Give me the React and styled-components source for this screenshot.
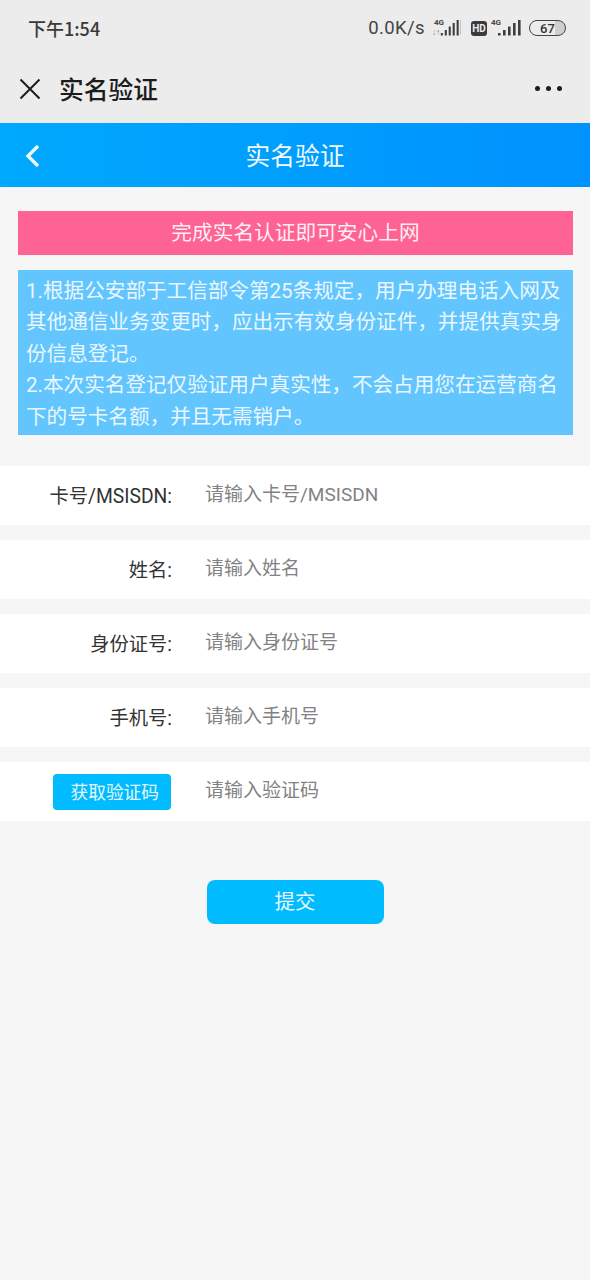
import React from "react";
import styled, { createGlobalStyle } from "styled-components";

const Global = createGlobalStyle`
  html, body { margin: 0; padding: 0; background: #f6f6f6; }
  * { box-sizing: border-box; }
  body { font-family: "Noto Sans CJK SC", "Noto Sans", sans-serif; }
`;
const Page = styled.div`
  width: 590px; height: 1280px; background: #f6f6f6; overflow: hidden;
  display: flex; flex-direction: column;
`;
const Chrome = styled.div`background: #ececec; height: 123px; display: flex; flex-direction: column;`;
const StatusBar = styled.div`
  height: 56px; display: flex; align-items: center; justify-content: space-between;
  padding: 0 24px 0 28px; color: #3a3a3a;
`;
const Time = styled.span`font-size: 18px; font-weight: 500; font-family: "Noto Sans CJK SC", Roboto, sans-serif; line-height: 1; margin-top: -1px;`;
const StatusRight = styled.div`display: flex; align-items: center; gap: 8px;`;
const Speed = styled.span`font-family: Roboto, sans-serif; font-size: 18.5px; letter-spacing: 0.4px; color: #444; margin-right: -1px;`;
const Signal = styled.div`position: relative; width: ${p => p.$w}px; height: 20px;`;
const Tiny = styled.span`
  position: absolute; left: ${p => p.$l}px; top: 0; font: 700 8px/9px Roboto, sans-serif; color: #444;
`;
const Arrows = styled.span`
  position: absolute; left: 0; top: 10px; font: 400 8px/9px Roboto, sans-serif; color: #777;
`;
const HdBadge = styled.span`
  width: 16px; height: 15px; border-radius: 3px; background: #3b3b3b; color: #ececec;
  font: 700 10px/15px Roboto, sans-serif; text-align: center; margin: 0 -4px 0 2px;
`;
const Battery = styled.div`
  width: 37px; height: 16px; border: 1.5px solid #444; border-radius: 8px; position: relative;
  display: flex; align-items: center; justify-content: center; overflow: hidden;
  font: 500 13px/1 Roboto, sans-serif; color: #333;
  background: linear-gradient(90deg, #ececec 72%, #cfcfcf 72%);
`;
const TitleBar = styled.div`
  flex: 1; display: flex; align-items: center; justify-content: space-between;
  padding: 0 28px 2px 19px;
`;
const TitleLeft = styled.div`display: flex; align-items: center; gap: 18px;`;
const TitleText = styled.span`font-size: 24.75px; font-weight: 500; color: #1c1c1c; line-height: 1;`;
const Dots = styled.div`display: flex; gap: 6px;`;
const Dot = styled.i`width: 5px; height: 5px; border-radius: 50%; background: #1c1c1c;`;
const BlueHeader = styled.header`
  height: 64px; position: relative; display: flex; align-items: center; justify-content: center;
  background: linear-gradient(90deg, #00a9fd, #0092fe); color: #f2faff;
  font-size: 24.75px; font-weight: 400; padding-bottom: 2px;
`;
const Back = styled.svg`position: absolute; left: 25px; top: 21px;`;
const Content = styled.main`padding: 24px 17px 0 18px; display: flex; flex-direction: column;`;
const Banner = styled.div`
  height: 44px; background: #ff6394; color: #fdeef3; font-size: 20.7px;
  display: flex; align-items: center; justify-content: center; line-height: 1; padding-bottom: 4px;
`;
const Notice = styled.div`
  margin-top: 15px; height: 165px; background: #62c5fe; color: #eaf7ff;
  font-size: 20.6px; line-height: 31.4px; padding: 6px 8px 0;
  font-family: Roboto, "Noto Sans CJK SC", sans-serif;
`;
const Form = styled.form`margin-top: 31px; display: flex; flex-direction: column; gap: 15px;`;
const Row = styled.div`
  height: 59px; background: #fff; display: grid; grid-template-columns: 172px 1fr; column-gap: 34px;
  align-items: center;
`;
const Label = styled.label`
  text-align: right; font-size: 19.3px; color: #333; line-height: 1; padding-top: 2px;
  font-family: Roboto, "Noto Sans CJK SC", sans-serif;
`;
const Field = styled.input`
  border: 0; outline: 0; background: transparent; width: 100%; padding: 0; margin: -2px 0 0 -1px;
  font-size: 19px; font-family: Roboto, "Noto Sans CJK SC", sans-serif;
  &::placeholder { color: #828282; opacity: 1; }
`;
const CodeButton = styled.button`
  justify-self: end; width: 118px; height: 36px; border: 0; border-radius: 4px; background: #00bcfe;
  color: #e6f8ff; font: 400 17.7px/1 "Noto Sans CJK SC", sans-serif; padding: 0 12px 0 0;
  text-align: right; margin-right: 1px;
`;
const Submit = styled.button`
  align-self: center; margin-top: 44px; width: 177px; height: 44px; border: 0; border-radius: 8px;
  background: #00bcfe; color: #e6f8ff; font: 400 20.5px/1 "Noto Sans CJK SC", sans-serif; padding: 0 0 3px;
`;

const Bars = ({ x = 0, w = 24 }) => (
  <svg width={w} height="20" viewBox="0 0 24 20" preserveAspectRatio="none" style={{ position: "absolute", left: x, top: 0 }}>
    <g fill="#3e3e3e">
      <rect x="1" y="15" width="2.6" height="2.5" />
      <rect x="6" y="12" width="2.6" height="5.5" />
      <rect x="11" y="8.5" width="2.6" height="9" />
      <rect x="16" y="5" width="2.6" height="12.5" />
      <rect x="21" y="2" width="2.6" height="15.5" />
    </g>
  </svg>
);

const Separator = styled.i`
  position: absolute; left: 28px; top: 2px; width: 1px; height: 15px; background: #c4c4c4;
`;

const rows = [
  ["卡号/MSISDN:", "请输入卡号/MSISDN"],
  ["姓名:", "请输入姓名"],
  ["身份证号:", "请输入身份证号"],
  ["手机号:", "请输入手机号"],
];

export default function App() {
  return (
    <Page>
      <Global />
      <Chrome>
        <StatusBar>
          <Time>下午1:54</Time>
          <StatusRight>
            <Speed>0.0K/s</Speed>
            <Signal $w={29}>
              <Tiny $l={2}>4G</Tiny>
              <Arrows>↓↑</Arrows>
              <Bars x={8} w={19} />
              <Separator />
            </Signal>
            <HdBadge>HD</HdBadge>
            <Signal $w={30}><Tiny $l={0}>4G</Tiny><Bars x={6} /></Signal>
            <Battery>67</Battery>
          </StatusRight>
        </StatusBar>
        <TitleBar>
          <TitleLeft>
            <svg width="22" height="22" viewBox="0 0 22 22" fill="none" stroke="#1c1c1c" strokeWidth="2">
              <path d="M1.5 1.5 20.5 20.5M20.5 1.5 1.5 20.5" />
            </svg>
            <TitleText>实名验证</TitleText>
          </TitleLeft>
          <Dots><Dot /><Dot /><Dot /></Dots>
        </TitleBar>
      </Chrome>
      <BlueHeader>
        <Back width="16" height="24" viewBox="0 0 16 24" fill="none" stroke="#eefaff" strokeWidth="3.4">
          <path d="M13 2 3 12l10 10" />
        </Back>
        实名验证
      </BlueHeader>
      <Content>
        <Banner>完成实名认证即可安心上网</Banner>
        <Notice>
          1.根据公安部于工信部令第25条规定，用户办理电话入网及其他通信业务变更时，应出示有效身份证件，并提供真实身份信息登记。<br />
          2.本次实名登记仅验证用户真实性，不会占用您在运营商名下的号卡名额，并且无需销户。
        </Notice>
      </Content>
      <Form>
        {rows.map(([label, hint]) => (
          <Row key={label}>
            <Label>{label}</Label>
            <Field placeholder={hint} />
          </Row>
        ))}
        <Row>
          <CodeButton type="button">获取验证码</CodeButton>
          <Field placeholder="请输入验证码" />
        </Row>
        <Submit type="button">提交</Submit>
      </Form>
    </Page>
  );
}
